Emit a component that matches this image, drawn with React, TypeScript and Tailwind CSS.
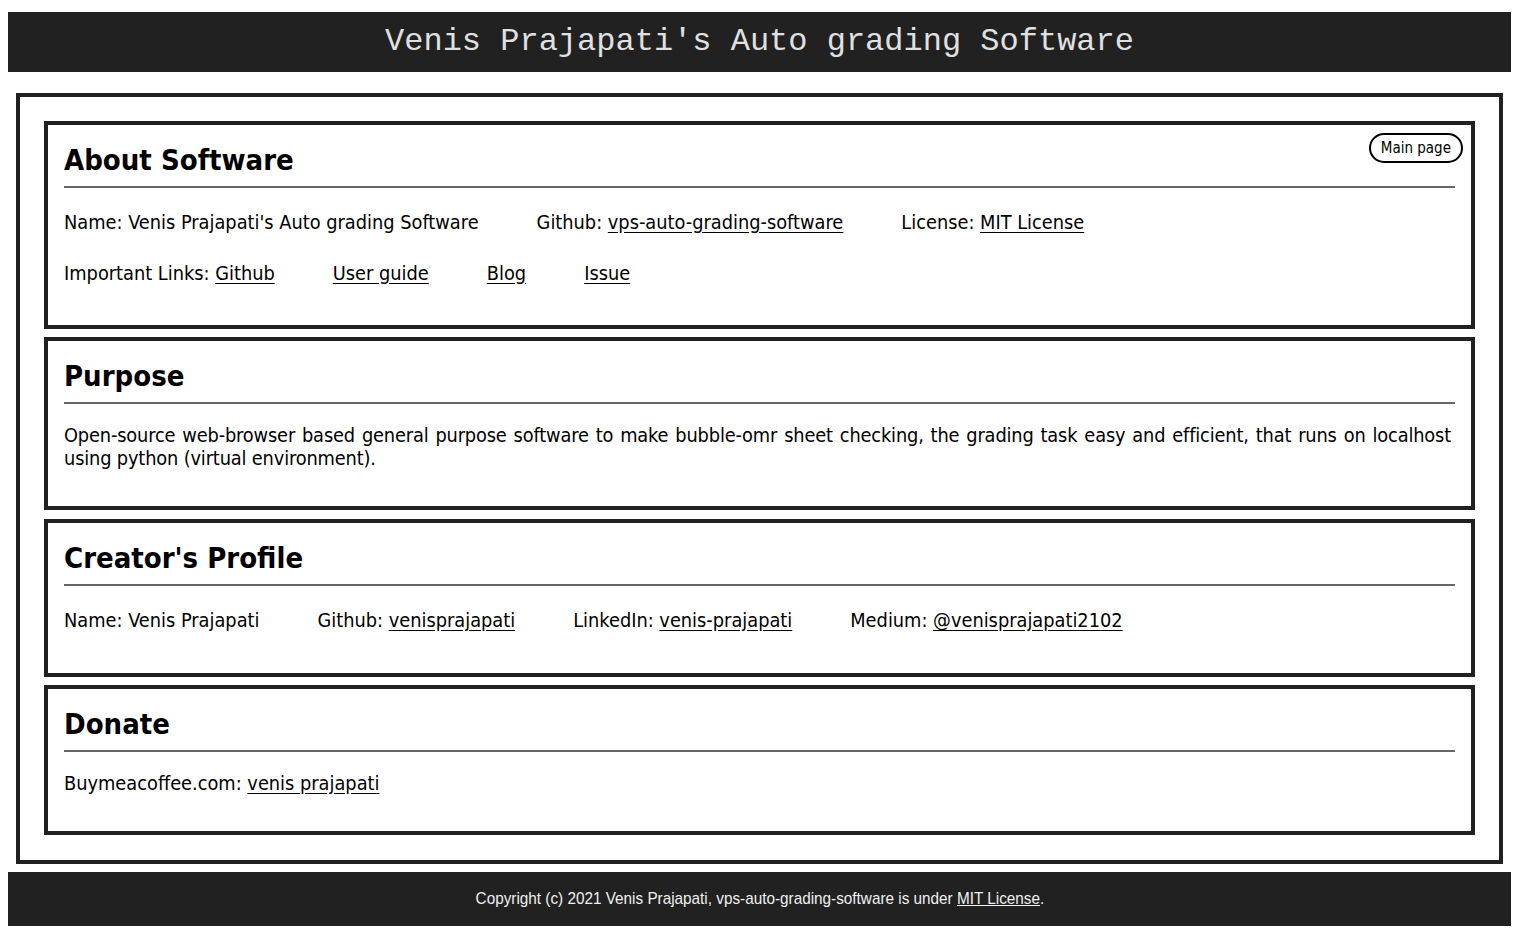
import React from "react";

const body = { fontFamily: '"DejaVu Sans Condensed", "Open Sans", sans-serif' };

function Card({
  title,
  children,
  extra,
  mt,
  pb,
  cls,
}: {
  title: string;
  children: React.ReactNode;
  extra?: React.ReactNode;
  mt: string;
  pb: string;
  cls?: string;
}) {
  return (
    <section className={`relative border-4 border-[#212121] px-4 pt-[18px] ${pb} ${cls ?? ""}`}>
      {extra}
      <h2 className="text-[29px] leading-[34px] font-bold text-black">{title}</h2>
      <div className="mt-[9px] h-[2px] bg-[#666]" />
      <div className={mt}>{children}</div>
    </section>
  );
}

const A = ({ children }: { children: React.ReactNode }) => (
  <a href="#" className="underline underline-offset-[3px] text-black">{children}</a>
);

export default function App() {
  return (
    <div className="min-h-[933px] bg-white px-2 pt-[12px] pb-2 text-black" style={body}>
      <header className="h-[60px] bg-[#212121] flex items-center justify-center">
        <h1 className="text-[32px] text-[#e0e0e0]" style={{ fontFamily: '"Liberation Mono", monospace' }}>
          Venis Prajapati's Auto grading Software
        </h1>
      </header>
      <main className="mx-2 mt-[21px] border-4 border-[#212121] px-6 pt-6 pb-[25px] flex flex-col gap-2 text-[19.8px] leading-[23px]">
        <Card
          title="About Software"
          mt="mt-[23px]"
          pb="pb-[40px]"
          extra={
            <a href="#" className="absolute right-[8px] top-[8px] h-[30px] px-[10px] flex items-center rounded-full border-2 border-black text-[15px] leading-none text-black">
              Main page
            </a>
          }
        >
          <div className="flex gap-[58px]">
            <span>Name: Venis Prajapati's Auto grading Software</span>
            <span>Github: <A>vps-auto-grading-software</A></span>
            <span>License: <A>MIT License</A></span>
          </div>
          <div className="flex gap-[58px] mt-[28px]">
            <span>Important Links: <A>Github</A></span>
            <A>User guide</A>
            <A>Blog</A>
            <A>Issue</A>
          </div>
        </Card>
        <Card title="Purpose" mt="mt-[20px]" pb="pb-[36px]">
          <p className="text-justify pr-[4px] tracking-[-0.15px]">
            Open-source web-browser based general purpose software to make bubble-omr sheet checking, the grading task easy and efficient, that runs on localhost using python (virtual environment).
          </p>
        </Card>
        <Card title="Creator's Profile" mt="mt-[23px]" pb="pb-[41px]" cls="mt-[1px]">
          <div className="flex gap-[58px]">
            <span>Name: Venis Prajapati</span>
            <span>Github: <A>venisprajapati</A></span>
            <span>LinkedIn: <A>venis-prajapati</A></span>
            <span>Medium: <A>@venisprajapati2102</A></span>
          </div>
        </Card>
        <Card title="Donate" mt="mt-[20px]" pb="pb-[36px]">
          <span>Buymeacoffee.com: <A>venis prajapati</A></span>
        </Card>
      </main>
      <footer
        className="mt-2 h-[54px] bg-[#212121] flex items-center justify-center text-[17px] text-[#f0f0f0]"
        style={{ fontFamily: '"Liberation Sans Narrow", "Liberation Sans", sans-serif' }}
      >
        <span className="inline-block scale-x-[0.9]">
          Copyright (c) 2021 Venis Prajapati, vps-auto-grading-software is under{" "}
          <a href="#" className="underline text-[#f0f0f0]">MIT License</a>.
        </span>
      </footer>
    </div>
  );
}
